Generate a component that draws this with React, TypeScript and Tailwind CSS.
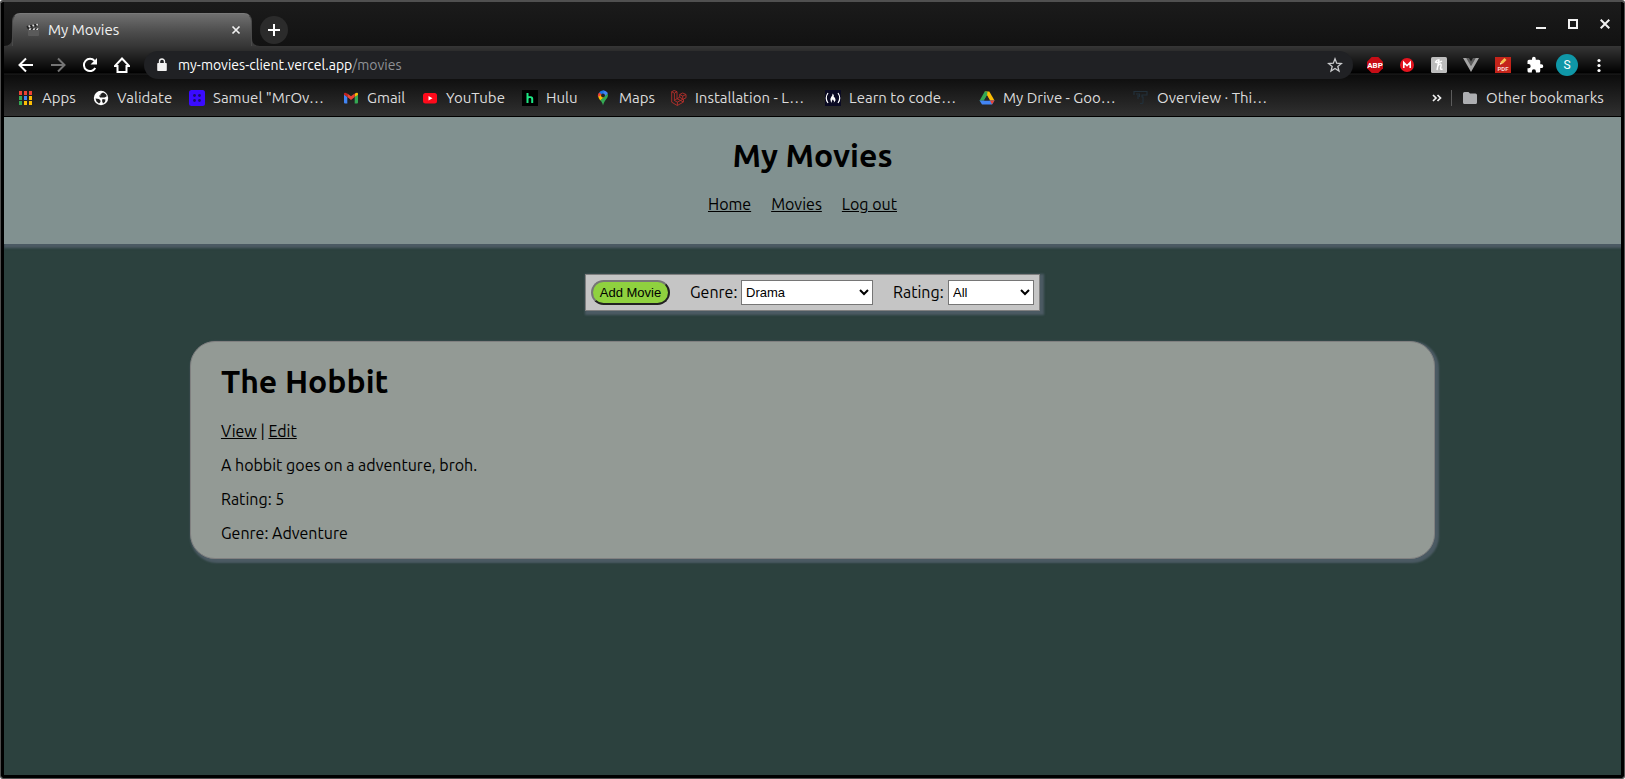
import React from "react";

const Svg = ({ size = 16, box = 16, className = "", children }: { size?: number; box?: number; className?: string; children: React.ReactNode }) => (
  <svg width={size} height={size} viewBox={`0 0 ${box} ${box}`} className={`shrink-0 ${className}`} fill="none" aria-hidden="true">
    {children}
  </svg>
);

const AppsIcon = () => {
  const colors = ["#ea4335", "#ea4335", "#ea4335", "#34a853", "#4285f4", "#fbbc05", "#34a853", "#fbbc05", "#fbbc05"];
  return (
    <Svg>
      {colors.map((c, i) => (
        <rect key={i} x={1 + (i % 3) * 5} y={1 + Math.floor(i / 3) * 5} width="3" height="4" fill={c} />
      ))}
    </Svg>
  );
};

const GlobeIcon = () => (
  <Svg>
    <circle cx="8" cy="8" r="7.2" fill="#fff" />
    <path d="M10 2.5 7.5 4v1.5H6L7 7.5h4.500L13.500 6.500V5L12 3.500ZM2.500 8.500 6 9l1.500 1.500V12L6 13.500 3.500 11.500ZM9.500 9 12.500 9.500 12 12 10 13.500 9 11Z" fill="#222" />
  </Svg>
);

const SamuelIcon = () => (
  <Svg>
    <rect width="16" height="16" rx="2.5" fill="#3a0bff" />
    <circle cx="5.5" cy="5.5" r="1.4" fill="#1a0c70" />
    <circle cx="10.5" cy="5.5" r="1.4" fill="#1a0c70" />
    <circle cx="5.5" cy="10.5" r="1.4" fill="#1a0c70" />
    <circle cx="10.5" cy="10.5" r="1.4" fill="#1a0c70" />
  </Svg>
);

const GmailIcon = () => (
  <Svg>
    <path d="M1 4v8.5q0 1 1 1h2.3V7L1 4Z" fill="#4285f4" />
    <path d="M15 4v8.5q0 1-1 1h-2.3V7L15 4Z" fill="#34a853" />
    <path d="M11.7 7V4l1-.9Q15 1.9 15 4v.8Z" fill="#fbbc04" />
    <path d="M4.3 7V3.4L8 6.3l3.7-2.9V7L8 10Z" fill="#ea4335" />
    <path d="M1 4.8V4q0-2.1 2.3-.9l1 .8V7Z" fill="#c5221f" />
  </Svg>
);

const YouTubeIcon = () => (
  <Svg>
    <rect x="1" y="3" width="14" height="10.5" rx="2.5" fill="#ff0a1b" />
    <path d="M6.5 6v4.5L10.5 8.2Z" fill="#fff" />
  </Svg>
);

const HuluIcon = () => (
  <Svg>
    <rect width="16" height="16" fill="#000" />
    <path d="M4.5 3h2v3.2h2.2q2.5 0 2.5 2.5V13h-2V9q0-1-.9-1h-.9q-.9 0-.9 1v4h-2Z" fill="#1ce783" />
  </Svg>
);

const MapsIcon = () => (
  <Svg>
    <path d="M8 .5a5.2 5.2 0 0 1 4.8 3.3L8.500 8 5 4Z" fill="#4285f4" />
    <path d="M8 .5a5 5 0 0 0-3.9 1.9L7 5 9.500 .7Z" fill="#1a73e8" />
    <path d="M4.1 2.4C2.5 4.5 2.6 6 3.200 7L7 6V4.500Z" fill="#ea4335" />
    <path d="M3.2 6.800q.5 1.500 2.1 3.600L9.800 7 7 4.800Z" fill="#fbbc04" />
    <path d="M12.800 3.800C13.800 8.500 9.500 9.500 8 15.500 7.500 13 6.500 11.800 5.300 10.300Z" fill="#34a853" />
    <circle cx="8" cy="5.5" r="1.9" fill="#222" />
  </Svg>
);

const LaravelIcon = () => (
  <Svg>
    <path d="M.7 1.7 3.2.5 6 1.7v7l2.7-1.5V4.5l3-1.5 3.3 1.5v3.3L12.500 9v3L6.300 15.500.7 12.200V1.700l2.700 1.500L6 1.700M3.400 3.200v7.300l3 1.600v3.400M6.400 12.100 12.300 9M3.400 10.500 6 8.700l6.300 3.200M8.700 4.500l3 1.600L15 4.500M11.700 6.100v3L8.700 7.200" stroke="#b5302b" strokeWidth=".9" strokeLinejoin="round" />
  </Svg>
);

const FreeCodeIcon = () => (
  <Svg>
    <rect width="16" height="16" fill="#0a0a23" />
    <path d="M3 3Q-.5 8 3 13M13 3q3.500 5 0 10" stroke="#fff" strokeWidth="1.2" />
    <path d="M7.500 3.500q.2 2-1.300 3.500T5.800 11.500q.5.8 1.200 1.200Q6 11 8 9.300q.2 1.400 1.200 1.800-.1 1-.7 1.600Q11.500 11 10 8q-.5-1-1.200-1Q9.500 4.500 7.500 3.500Z" fill="#fff" />
  </Svg>
);

const DriveIcon = () => (
  <Svg>
    <path d="M5.700 1.500h4.600l5.200 9H11Z" fill="#fbbc04" />
    <path d="M5.700 1.500h2.800L8 5.500 5 10.500.5 10.700Z" fill="#34a853" />
    <path d="M3 14.500.5 10.500h15L13 14.500Z" fill="#4285f4" />
    <path d="m11 10.500h4.500L13 14.500Z" fill="#ea4335" />
    <path d="M8 5.500 5.200 10.500h5.600Z" fill="#282828" />
  </Svg>
);

const ThingIcon = () => (
  <Svg>
    <path d="M1 5V1.500h13V5H9v2h1v5.500q0 1-1 1H7M5 5v4M3 4h3.500v3" stroke="#22303a" strokeWidth="1.2" />
  </Svg>
);

const ClapperIcon = () => (
  <Svg>
    <rect x="3" y="7" width="11" height="7" rx="1" fill="#5a5a5a" />
    <path d="m1.500 4 11.500-2.500.6 2.500L2.200 6.700Z" fill="#252525" />
    <path d="M3 6h11v2H3Z" fill="#252525" />
    <path d="m3 3.700 1.800-.4.900 1.900-1.600.4ZM7 2.800 8.800 2.400l.8 1.900-1.700.4ZM11 2l1.600-.4.700 1.800-1.500.4ZM4.500 6.300h2L5.500 8h-2ZM8.500 6.300h2l-1 1.700h-2ZM12 6.300h1.800L13 8h-2Z" fill="#ddd" />
  </Svg>
);

const bookmarks: { label: string; width: string; Icon: React.FC }[] = [
  { label: "Apps", width: "w-[35px]", Icon: AppsIcon },
  { label: "Validate", width: "w-[56px]", Icon: GlobeIcon },
  { label: 'Samuel "MrOv…', width: "w-[114px]", Icon: SamuelIcon },
  { label: "Gmail", width: "w-[39px]", Icon: GmailIcon },
  { label: "YouTube", width: "w-[60px]", Icon: YouTubeIcon },
  { label: "Hulu", width: "w-[33px]", Icon: HuluIcon },
  { label: "Maps", width: "w-[36px]", Icon: MapsIcon },
  { label: "Installation - L…", width: "w-[114px]", Icon: LaravelIcon },
  { label: "Learn to code…", width: "w-[114px]", Icon: FreeCodeIcon },
  { label: "My Drive - Goo…", width: "w-[114px]", Icon: DriveIcon },
  { label: "Overview · Thi…", width: "w-[114px]", Icon: ThingIcon },
];

const iconButton = "flex h-8 w-8 shrink-0 items-center justify-center";

const TabStrip = () => (
  <div className="flex h-11 shrink-0 items-end bg-linear-to-b from-[#1b1b1b] to-[#121212]">
    <Svg size={8} box={8}>
      <path d="M0 8Q8 8 8 0V8Z" fill="#3a3a3a" />
    </Svg>
    <div className="flex h-[33px] w-60 items-center rounded-t-lg border border-b-0 border-t-[#7a7a7a] border-r-[#4a4a4a] border-l-[#4a4a4a] bg-linear-to-b from-[#707070] via-[#505050] to-[#363636] pr-[7px] pl-3">
      <ClapperIcon />
      <span className="ml-[7px] flex-1 text-[15px] text-[#f1f1f1]">My Movies</span>
      <button aria-label="Close tab" className="flex h-4 w-4 items-center justify-center">
        <Svg size={10} box={10}>
          <path d="m1.5 1.5 7 7m0-7-7 7" stroke="#f1f1f1" strokeWidth="1.7" />
        </Svg>
      </button>
    </div>
    <Svg size={8} box={8}>
      <path d="M0 0Q0 8 8 8H0Z" fill="#3a3a3a" />
    </Svg>
    <button aria-label="New tab" className="mb-[2px] flex h-7 w-7 items-center justify-center rounded-full bg-[#2b2b2b]">
      <Svg size={12} box={12}>
        <path d="M6 0v12M0 6h12" stroke="#fff" strokeWidth="2" />
      </Svg>
    </button>
    <div className="mb-[6px] ml-auto flex">
      <button aria-label="Minimize" className={iconButton}>
        <Svg size={10} box={10}>
          <path d="M0 9h10" stroke="#f1f1f1" strokeWidth="2" />
        </Svg>
      </button>
      <button aria-label="Maximize" className={iconButton}>
        <Svg size={10} box={10}>
          <path d="M1 1h8v8H1Z" stroke="#f1f1f1" strokeWidth="2" />
        </Svg>
      </button>
      <button aria-label="Close" className={iconButton}>
        <Svg size={10} box={10}>
          <path d="m.7.7 8.6 8.6m0-8.6L.7 9.3" stroke="#f1f1f1" strokeWidth="2" />
        </Svg>
      </button>
    </div>
  </div>
);

const Toolbar = () => (
  <div className="flex h-[38px] items-center pr-1.5 pl-1.5">
    <button aria-label="Back" className={iconButton}>
      <Svg>
        <path d="M15 8H2m6-6.5L1.5 8 8 14.5" stroke="#fff" strokeWidth="2" />
      </Svg>
    </button>
    <button aria-label="Forward" className={iconButton}>
      <Svg>
        <path d="M1 8h13M8 1.5 14.5 8 8 14.5" stroke="#757575" strokeWidth="2" />
      </Svg>
    </button>
    <button aria-label="Reload" className={iconButton}>
      <Svg>
        <path d="M13.3 11A6.1 6.1 0 1 1 12.6 3.9" stroke="#fff" strokeWidth="2" />
        <path d="M15 1v6.5H8.5Z" fill="#fff" />
      </Svg>
    </button>
    <button aria-label="Home" className={iconButton}>
      <Svg>
        <path d="M.8 9H3.500V15h9V9h2.700L8 1.500Z" stroke="#fff" strokeWidth="2" />
      </Svg>
    </button>
    <form className="ml-1.5 flex h-7 flex-1 items-center rounded-full bg-[#202124] pr-[10px] pl-[10px]" onSubmit={(e) => e.preventDefault()}>
      <Svg>
        <path d="M4 6h8q.8 0 .8.8v6.400q0 .8-.8.8H4q-.8 0-.8-.8V6.800q0-.8.8-.8Z" fill="#f1f1f1" />
        <path d="M5.500 6.500V4.500a2.500 2.500 0 0 1 5 0v2" stroke="#f1f1f1" strokeWidth="1.4" />
      </Svg>
      <a href="#address" className="ml-2 flex-1 text-sm text-white">
        my-movies-client.vercel.app<span className="text-[#8f9195]">/movies</span>
      </a>
      <button type="button" aria-label="Bookmark this page" className="flex h-4 w-4 items-center justify-center">
        <Svg>
          <path d="m8 1.800 1.700 4.400 4.800.3-3.700 3 1.200 4.600L8 11.500l-4 2.600 1.200-4.600-3.700-3 4.800-.3Z" stroke="#c9cacc" strokeWidth="1.3" />
        </Svg>
      </button>
    </form>
    <div className="ml-1.5 flex">
      <button aria-label="Adblock Plus" className={iconButton}>
        <Svg>
          <path d="M4.700 0h6.600L16 4.700v6.600L11.300 16H4.700L0 11.300V4.700Z" fill="#c70d16" />
          <text x="8" y="10.8" textAnchor="middle" fontSize="8" fontWeight="700" fontFamily="Roboto, sans-serif" fill="#fff">ABP</text>
        </Svg>
      </button>
      <button aria-label="Mega" className={iconButton}>
        <Svg>
          <circle cx="8" cy="8" r="7" fill="#e4141f" />
          <path d="M4.800 11V5.500L8 8.700l3.200-3.200V11" stroke="#fff" strokeWidth="1.6" />
        </Svg>
      </button>
      <button aria-label="Honey" className={iconButton}>
        <Svg>
          <rect width="16" height="16" rx="1.5" fill="#bdbdbd" />
          <path d="M6 13 8 3Q5.500 2.500 4.500 5q3 1.500 6.500-1M6.700 9.500q1-2.500 2.500-2.500 1.300 0 .8 2l-.5 2.500q0 1.500 2 .3" stroke="#fff" strokeWidth="1.4" />
        </Svg>
      </button>
      <button aria-label="Vue devtools" className={iconButton}>
        <Svg>
          <path d="M0 1h4l4 7 4-7h4L8 15Z" fill="#a5a5a5" />
          <path d="M3.200 1H6l2 3.500L10 1h2.800L8 9.300Z" fill="#5c5c5c" />
        </Svg>
      </button>
      <button aria-label="PDF editor" className={iconButton}>
        <Svg>
          <rect width="16" height="16" fill="#c4241a" />
          <path d="m5 7.500 1-3L9.500 1l2 2L8 6.500Z" fill="#f5c451" />
          <path d="m5 7.500.5-1.700L6.800 7Z" fill="#fff" />
          <text x="8" y="14" textAnchor="middle" fontSize="6" fontWeight="700" fontFamily="Roboto, sans-serif" fill="#f6d9d5">PDF</text>
        </Svg>
      </button>
      <button aria-label="Extensions" className={iconButton}>
        <Svg size={18} box={24}>
          <path d="M20.500 11H19V7a2 2 0 0 0-2-2h-4V3.500a2.500 2.500 0 0 0-5 0V5H4a2 2 0 0 0-2 2v3.800h1.500a2.700 2.700 0 0 1 0 5.400H2V20a2 2 0 0 0 2 2h3.800v-1.500a2.700 2.700 0 0 1 5.400 0V22H17a2 2 0 0 0 2-2v-4h1.500a2.500 2.500 0 0 0 0-5Z" fill="#fff" />
        </Svg>
      </button>
      <button aria-label="Profile" className={iconButton}>
        <span className="flex h-[22px] w-[22px] items-center justify-center rounded-full bg-[#0f97a7] font-['Roboto',sans-serif] text-xs text-white">S</span>
      </button>
      <button aria-label="Menu" className={iconButton}>
        <Svg>
          <circle cx="8" cy="3.5" r="1.6" fill="#fff" />
          <circle cx="8" cy="8.5" r="1.6" fill="#fff" />
          <circle cx="8" cy="13.5" r="1.6" fill="#fff" />
        </Svg>
      </button>
    </div>
  </div>
);

const BookmarksBar = () => (
  <nav aria-label="Bookmarks" className="flex h-7 items-center gap-4 pr-[15px] pl-[14px] text-[15px] text-[#dcdcdc]">
    {bookmarks.map(({ label, width, Icon }) => (
      <a key={label} href="#bookmark" className="flex shrink-0 items-center gap-2">
        <Icon />
        <span className={`${width} whitespace-nowrap`}>{label}</span>
      </a>
    ))}
    <div className="ml-auto flex items-center">
      <button aria-label="More bookmarks" className="flex h-4 w-4 items-center justify-center">
        <Svg size={10} box={10}>
          <path d="m1 2 3 3-3 3m4.500-6 3 3-3 3" stroke="#f1f1f1" strokeWidth="1.7" />
        </Svg>
      </button>
      <span className="ml-1.5 h-4 w-px bg-[#5c5c5c]" />
      <a href="#other" className="ml-[10px] flex items-center gap-2">
        <Svg>
          <path d="M1 3.500Q1 2 2.500 2H6.500L8 3.500h5.500q1.500 0 1.500 1.500v7.500q0 1.500-1.500 1.500h-11Q1 14 1 12.500Z" fill="#adaeb1" />
        </Svg>
        <span className="w-[120px] whitespace-nowrap">Other bookmarks</span>
      </a>
    </div>
  </nav>
);

const selectStyle = "h-[25px] border border-[#767676] bg-white font-['Liberation_Sans',sans-serif] text-[13px] text-black";

const MoviesPage = () => (
  <div className="flex-1 overflow-hidden bg-[#2c413e] text-base leading-[18px] text-black">
    <header className="flex h-[127px] flex-col items-center bg-[#819190] pt-5 shadow-[2px_2px_2px_2px_#4b5a63]">
      <h1 className="text-[32px] leading-[37px] font-bold">My Movies</h1>
      <nav className="mt-[21px] flex">
        <a href="#home" className="mr-5 underline">Home</a>
        <a href="#movies" className="mr-5 underline">Movies</a>
        <a href="#logout" className="mr-5 underline">Log out</a>
      </nav>
    </header>
    <main className="flex flex-col items-center pt-[30px]">
      <div className="flex items-center border border-[#808080] bg-[#c5c5c5] p-[5px] shadow-[2px_2px_2px_2px_#4b5a63]">
        <button className="h-[25px] w-[79px] rounded-[15px] border-2 border-t-[#767676] border-r-[#212121] border-b-[#212121] border-l-[#767676] bg-[#8fd13f] font-['Liberation_Sans',sans-serif] text-[13px] whitespace-nowrap">
          Add Movie
        </button>
        <label htmlFor="genre" className="ml-5 w-[51px] pb-0.5">Genre:</label>
        <select id="genre" defaultValue="Drama" className={`${selectStyle} w-[132px]`}>
          <option>All</option>
          <option>Adventure</option>
          <option>Drama</option>
        </select>
        <label htmlFor="rating" className="ml-5 w-[55px] pb-0.5">Rating:</label>
        <select id="rating" defaultValue="All" className={`${selectStyle} w-[86px]`}>
          <option>All</option>
          <option>5</option>
        </select>
      </div>
      <article className="mt-[30px] flex w-[77%] flex-col gap-4 rounded-[25px] border border-[#808080] bg-[#939a95] px-[30px] pt-[21px] pb-4 shadow-[2px_2px_2px_2px_#4b5a63]">
        <h2 className="mb-[6px] text-[32px] leading-[37px] font-bold">The Hobbit</h2>
        <p>
          <a href="#view" className="underline">View</a> | <a href="#edit" className="underline">Edit</a>
        </p>
        <p>A hobbit goes on a adventure, broh.</p>
        <p>Rating: 5</p>
        <p>Genre: Adventure</p>
      </article>
    </main>
  </div>
);

export default function App() {
  return (
    <div className="min-h-screen bg-white font-['Ubuntu','Noto_Sans',sans-serif]">
      <div className="flex min-h-screen flex-col overflow-hidden rounded-[3px] border border-t-2 border-[#505050] bg-black">
        <div className="flex flex-1 flex-col bg-black pr-[3px] pb-[3px] pl-[3px]">
          <TabStrip />
          <div className="h-[71px] border-b border-black bg-[linear-gradient(#363636_0px,#000_27px,#1f1f1f_28px,#0c0c0c_29px,#303030_70px)]">
            <Toolbar />
            <BookmarksBar />
          </div>
          <MoviesPage />
        </div>
      </div>
    </div>
  );
}
